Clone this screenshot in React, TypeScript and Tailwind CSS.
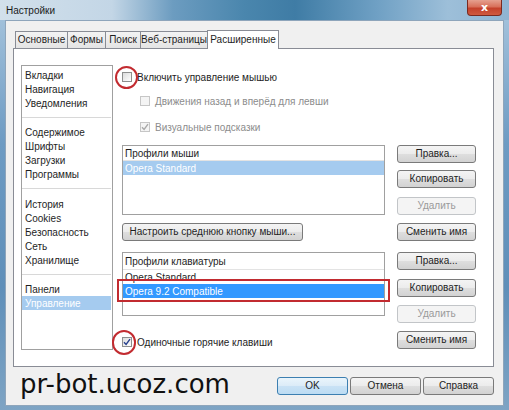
import React from "react";

function Check({ color }: { color: string }) {
  return (
    <svg width="8" height="8" viewBox="0 0 8 8" className="block">
      <path d="M1 4.2 L3.1 6.4 L7 1.2" fill="none" stroke={color} strokeWidth="1.4" />
    </svg>
  );
}

function Cb({ checked, disabled }: { checked?: boolean; disabled?: boolean }) {
  return (
    <span
      className={
        disabled
          ? "w-[10px] h-[10px] shrink-0 border border-[#c6c6c6] bg-[#f4f4f4] flex items-center justify-center"
          : "w-[10px] h-[10px] shrink-0 border border-[#8e8f8f] bg-[linear-gradient(135deg,#dcdcdc,#ffffff)] flex items-center justify-center"
      }
    >
      {checked && <Check color={disabled ? "#a8a8a8" : "#243e8c"} />}
    </span>
  );
}

function Btn({
  children,
  disabled,
  className = "",
}: {
  children: React.ReactNode;
  disabled?: boolean;
  className?: string;
}) {
  return (
    <div
      className={
        (disabled
          ? "border border-[#c2c5c8] bg-[#f4f4f4] text-[#9a9a9a] "
          : "border border-[#7a7a7a] bg-[linear-gradient(180deg,#f4f4f4_0%,#ececec_48%,#dedede_52%,#d2d2d2_100%)] text-[#1e1e1e] ") +
        "h-[18px] rounded-[3px] flex items-center justify-center text-[10px] leading-none whitespace-nowrap " +
        className
      }
    >
      {children}
    </div>
  );
}

const tabs = [
  { label: "Основные", w: "w-[53px]" },
  { label: "Формы", w: "w-[39px]" },
  { label: "Поиск", w: "w-[36px]" },
  { label: "Веб-страницы", w: "w-[68px]" },
];

function ListItem({ children, selected }: { children: React.ReactNode; selected?: boolean }) {
  return (
    <div
      className={
        selected
          ? "h-[14px] pl-[3px] flex items-center bg-[#a5cbef] text-white"
          : "h-[14px] pl-[3px] flex items-center text-[#1e1e1e]"
      }
    >
      {children}
    </div>
  );
}

export default function App() {
  return (
    <div className="w-[509px] h-[410px] overflow-hidden flex flex-col bg-[linear-gradient(180deg,#a9c6de_0%,#6d9bc3_35%,#5f8fb9_70%,#7ea4c4_100%)] font-['Liberation_Sans',sans-serif] text-[10px] text-[#1e1e1e]">
      {/* title bar */}
      <div className="h-[20px] shrink-0 flex items-start bg-[linear-gradient(90deg,#d2e0eb_0%,#c3d6e6_22%,#6c9cc0_34%,#4a86ad_48%,#3f7ca5_58%,#6fa0c4_74%,#9dbfd9_88%,#8fb4d2_100%)]">
        <div className="ml-[6px] mt-[5px] text-[10px] leading-[12px] text-[#1a1a1a]">Настройки</div>
        <div className="ml-auto mr-[7px] w-[35px] h-[16px] rounded-b-[4px] border border-t-0 border-[#7a2a20] bg-[linear-gradient(180deg,#e5a08f_0%,#d8705a_45%,#c4412b_55%,#cf5a3f_100%)] flex items-center justify-center">
          <span className="text-white font-bold text-[11px] leading-none font-['DejaVu_Sans',sans-serif]">x</span>
        </div>
      </div>

      {/* client */}
      <div className="mx-[5px] h-[386px] bg-[#f0f0f0] border border-[#8ea5bb] flex flex-col pl-[7px]">
        {/* tabs */}
        <div className="mt-[9px] ml-[2px] h-[19px] flex items-end -mb-px relative z-10">
          {tabs.map((t, i) => (
            <div
              key={t.label}
              className={
                t.w +
                (i > 0 ? " -ml-px" : "") +
                " h-[18px] border border-[#898c95] bg-[linear-gradient(180deg,#f3f3f3,#e4e4e4)] flex items-center justify-center text-[10px] leading-none whitespace-nowrap"
              }
            >
              {t.label}
            </div>
          ))}
          <div className="w-[72px] -ml-px h-[19px] border border-b-0 border-[#898c95] bg-white flex items-center justify-center text-[10px] leading-none pb-[1px] whitespace-nowrap">
            Расширенные
          </div>
        </div>

        {/* panel */}
        <div className="w-[481px] h-[319px] border border-[#898c95] bg-white pl-[7px] pt-[16px] flex items-start gap-[9px]">
          {/* left list */}
          <div className="w-[92px] h-[285px] border border-[#a0a0a0] pt-[2px] pr-[1px] flex flex-col">
            <ListItem>Вкладки</ListItem>
            <ListItem>Навигация</ListItem>
            <ListItem>Уведомления</ListItem>
            <div className="mt-[7px] mb-[7px] h-px bg-[#d8d8d8]" />
            <ListItem>Содержимое</ListItem>
            <ListItem>Шрифты</ListItem>
            <ListItem>Загрузки</ListItem>
            <ListItem>Программы</ListItem>
            <div className="mt-[7px] mb-[8px] h-px bg-[#d8d8d8]" />
            <ListItem>История</ListItem>
            <ListItem>Cookies</ListItem>
            <ListItem>Безопасность</ListItem>
            <ListItem>Сеть</ListItem>
            <ListItem>Хранилище</ListItem>
            <div className="mt-[7px] mb-[7px] h-px bg-[#d8d8d8]" />
            <ListItem>Панели</ListItem>
            <ListItem selected>Управление</ListItem>
          </div>

          {/* right column */}
          <div className="flex flex-col">
            <div className="mt-[5px] h-[14px] flex items-center">
              <div className="relative">
                <Cb />
                <span className="absolute left-[-7px] top-[-6px] w-[23px] h-[23px] rounded-full border-2 border-[#c22b30]" />
              </div>
              <span className="ml-[5px]">Включить управление мышью</span>
            </div>
            <div className="mt-[10px] ml-[18px] h-[14px] flex items-center text-[#8c8c8c]">
              <Cb disabled />
              <span className="ml-[5px]">Движения назад и вперёд для левши</span>
            </div>
            <div className="mt-[12px] ml-[18px] h-[14px] flex items-center text-[#8c8c8c]">
              <Cb checked disabled />
              <span className="ml-[5px]">Визуальные подсказки</span>
            </div>

            <div className="mt-[11px] grid grid-cols-[263px_79px] gap-x-[12px]">
              <div className="flex flex-col">
                {/* mouse profiles */}
                <div className="h-[70px] border border-[#a0a0a0] flex flex-col">
                  <div className="h-[15px] pl-[2px] flex items-center border-b border-[#e3e3e3]">Профили мыши</div>
                  <div className="h-[14px] pl-[2px] flex items-center bg-[#a5cbef] text-white">Opera Standard</div>
                </div>
                <Btn className="mt-[8px] w-[181px]">Настроить среднюю кнопку мыши...</Btn>
                {/* keyboard profiles */}
                <div className="mt-[11px] h-[64px] border border-[#a0a0a0] flex flex-col relative">
                  <div className="h-[17px] pl-[2px] flex items-center border-b border-[#e3e3e3]">Профили клавиатуры</div>
                  <div className="h-[14px] pl-[2px] flex items-center">Opera Standard</div>
                  <div className="relative h-[14px] pl-[2px] flex items-center bg-[#3399ff] text-white">
                    Opera 9.2 Compatible
                    <span className="absolute left-[-6px] right-[-6px] top-[-5px] bottom-[-4px] border-2 border-[#c22b30]" />
                  </div>
                </div>
                <div className="mt-[19px] h-[14px] flex items-center">
                  <div className="relative">
                    <Cb checked />
                    <span className="absolute left-[-10px] top-[-7px] w-[24px] h-[25px] rounded-full border-2 border-[#c22b30]" />
                  </div>
                  <span className="ml-[5px]">Одиночные горячие клавиши</span>
                </div>
              </div>
              <div className="flex flex-col">
                <Btn>Правка...</Btn>
                <Btn className="mt-[7px]">Копировать</Btn>
                <Btn disabled className="mt-[9px]">Удалить</Btn>
                <Btn className="mt-[8px]">Сменить имя</Btn>
                <Btn className="mt-[11px]">Правка...</Btn>
                <Btn className="mt-[9px]">Копировать</Btn>
                <Btn disabled className="mt-[8px]">Удалить</Btn>
                <Btn className="mt-[8px]">Сменить имя</Btn>
              </div>
            </div>
          </div>
        </div>

        {/* bottom */}
        <div className="w-[481px] mt-[10px] h-[18px] flex items-center">
          <div className="ml-[7px] text-[26px] leading-none text-[#111] font-['DejaVu_Sans',sans-serif] -mt-[4px]">pr-bot.ucoz.com</div>
          <div className="ml-auto flex gap-[2px]">
            <div className="w-[71px] h-[18px] rounded-[3px] border border-[#3c7fb1] bg-[linear-gradient(180deg,#eaf5fc_0%,#dcecf8_48%,#c9e2f5_52%,#bcdcf3_100%)] flex items-center justify-center text-[10px] leading-none">OK</div>
            <Btn className="w-[71px]">Отмена</Btn>
            <Btn className="w-[71px]">Справка</Btn>
          </div>
        </div>
      </div>
    </div>
  );
}
